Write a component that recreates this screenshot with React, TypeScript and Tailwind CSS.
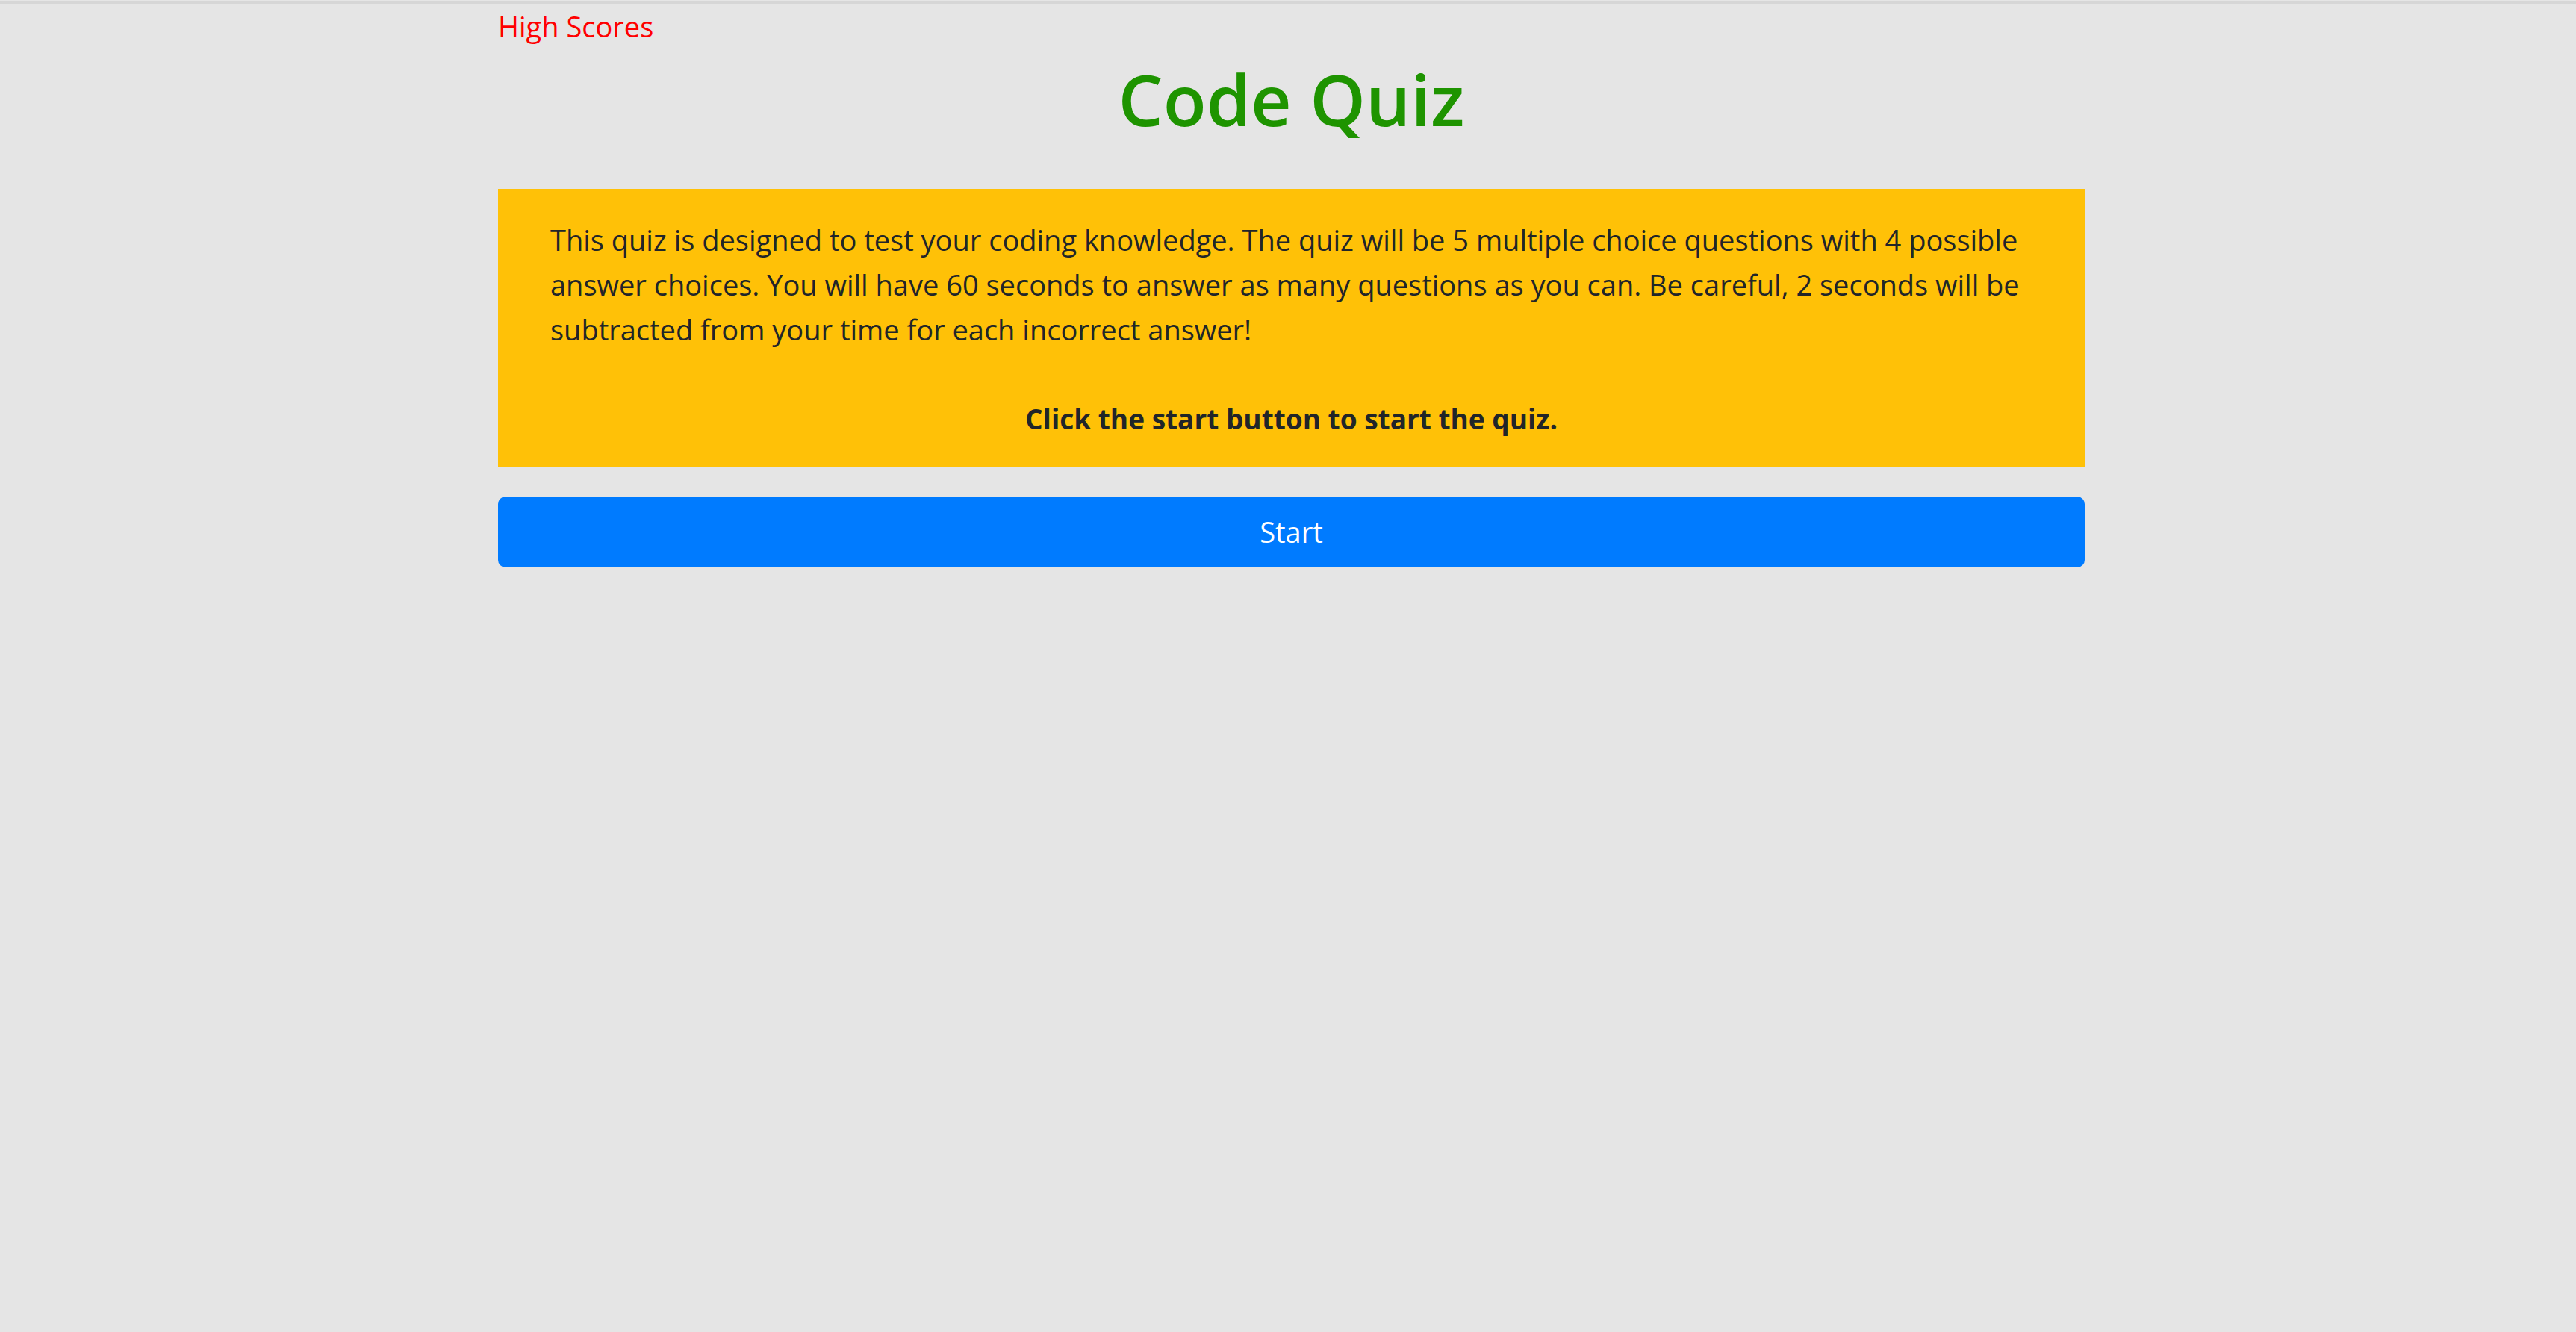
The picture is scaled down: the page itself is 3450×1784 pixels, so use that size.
import React from "react";

export default function App() {
  const startQuiz = () => {};

  return (
    <div className="min-h-screen bg-[#e5e5e5] text-[#212529]" style={{ fontFamily: "'Open Sans', 'Noto Sans', sans-serif" }}>
      {/* top edge line */}
      <div className="pt-[2px]">
        <div className="h-[3px] bg-[#d6d6d6]"></div>
      </div>

      <div className="ml-[667px] w-[2125px]">
        {/* Header */}
        <div className="h-[60px] leading-[60px] text-[38px]">
          <a href="#" className="text-[#ff0000]">High Scores</a>
        </div>
        <h1 className="mt-[7px] text-center text-[95px] leading-[120px] font-semibold text-[#1e9400]">
          Code Quiz
        </h1>

        {/* Intro */}
        <div className="mt-[61px] bg-[#ffc107] px-[70px] pt-[38px] pb-[34px] text-[38px] leading-[60px]">
          <p>
            This quiz is designed to test your coding knowledge. The quiz will be 5 multiple choice questions with 4 possible answer choices. You will have 60 seconds to answer as many questions as you can. Be careful, 2 seconds will be subtracted from your time for each incorrect answer!
          </p>
          <p className="mt-[60px] text-center font-bold text-[37px]">Click the start button to start the quiz.</p>
        </div>

        <button
          onClick={startQuiz}
          className="mt-[40px] w-full h-[95px] rounded-[10px] bg-[#007bff] text-white text-[38px]"
        >
          Start
        </button>
      </div>
    </div>
  );
}
